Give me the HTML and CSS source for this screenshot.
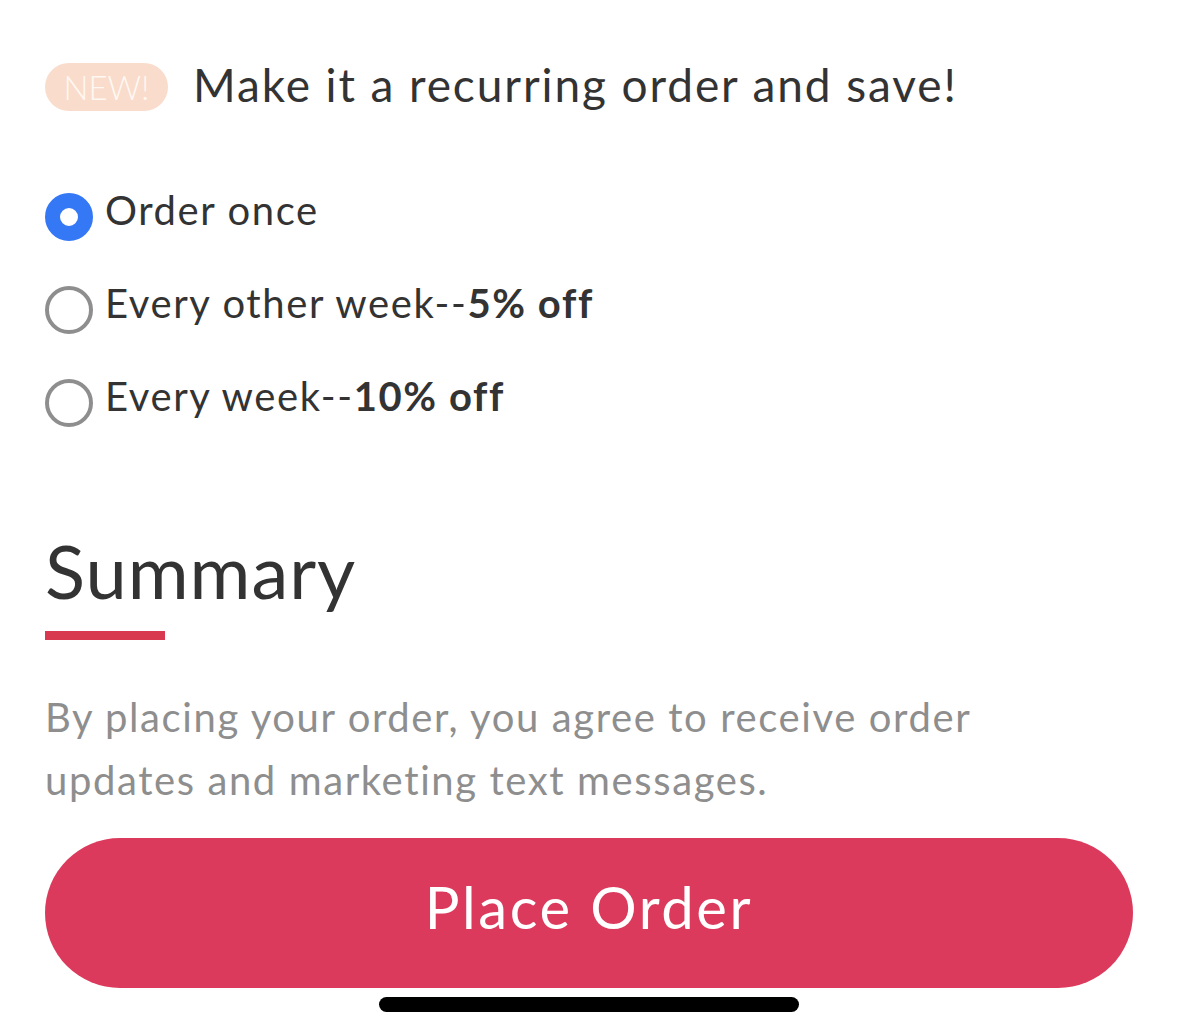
FILE: index.html
```html
<!DOCTYPE html>
<html>
<head>
<meta charset="utf-8">
<link rel="stylesheet" href="styles.css">
</head>
<body>
<div class="page">
  <div class="promo">
    <span class="badge">NEW!</span>
    <span class="promo-title">Make it a recurring order and save!</span>
  </div>
  <div class="options">
    <div class="option">
      <span class="radio checked"></span>
      <span class="label">Order once</span>
    </div>
    <div class="option">
      <span class="radio"></span>
      <span class="label">Every other week--<b>5% off</b></span>
    </div>
    <div class="option">
      <span class="radio"></span>
      <span class="label">Every week--<b>10% off</b></span>
    </div>
  </div>
  <h2 class="summary">Summary</h2>
  <div class="underline"></div>
  <p class="legal">By placing your order, you agree to receive order updates and marketing text messages.</p>
  <button class="place">Place Order</button>
  <div class="home-wrap"><div class="home"></div></div>
</div>
</body>
</html>
```
FILE: styles.css
```css
html, body {
  margin: 0;
  padding: 0;
  background: #fff;
}
body {
  font-family: "Lato", "Noto Sans", sans-serif;
  color: #333;
}
.page {
  width: 1179px;
  height: 1036px;
  box-sizing: border-box;
  padding: 63px 46px 0 45px;
  display: flex;
  flex-direction: column;
  overflow: hidden;
}
.promo {
  display: flex;
  align-items: center;
  gap: 25px;
  height: 48px;
}
.badge {
  display: flex;
  align-items: center;
  justify-content: center;
  width: 123px;
  height: 48px;
  border-radius: 24px;
  background: #f9dccb;
  color: #fff8f2;
  font-size: 33px;
  font-weight: 300;
}
.promo-title {
  font-size: 46px;
  font-weight: 400;
  color: #333;
  letter-spacing: 1.9px;
  margin-top: -6px;
}
.options {
  margin-top: 82px;
  display: flex;
  flex-direction: column;
  gap: 45px;
}
.option {
  display: flex;
  align-items: center;
  gap: 12px;
  height: 48px;
}
.radio {
  width: 48px;
  height: 48px;
  box-sizing: border-box;
  border-radius: 50%;
  border: 4px solid #8e8e8e;
  flex: none;
}
.radio.checked {
  border: 15px solid #3478f6;
  background: #fff;
}
.label {
  font-size: 40px;
  color: #333;
  margin-top: -14px;
  letter-spacing: 1.6px;
}
.label b {
  font-weight: 700;
}
.summary {
  margin: 104px 0 0 0;
  font-size: 74px;
  font-weight: 400;
  line-height: 80px;
  color: #333;
  letter-spacing: 1px;
}
.underline {
  margin-top: 20px;
  width: 120px;
  height: 9px;
  background: #d9394f;
}
.legal {
  margin: 46px 0 0 0;
  font-size: 40px;
  line-height: 63px;
  color: #8e8e8e;
  width: 1010px;
  letter-spacing: 1.6px;
}
.place {
  margin-top: 26px;
  width: 1088px;
  height: 150px;
  border: none;
  border-radius: 75px;
  background: #dc3a5c;
  color: #fff;
  font-family: inherit;
  font-size: 58px;
  font-weight: 400;
  letter-spacing: 2.6px;
  padding: 0 0 14px 0;
}
.home-wrap {
  display: flex;
  justify-content: center;
  margin-top: 9px;
  width: 1088px;
}
.home {
  width: 420px;
  height: 15px;
  border-radius: 8px;
  background: #000;
}
```
